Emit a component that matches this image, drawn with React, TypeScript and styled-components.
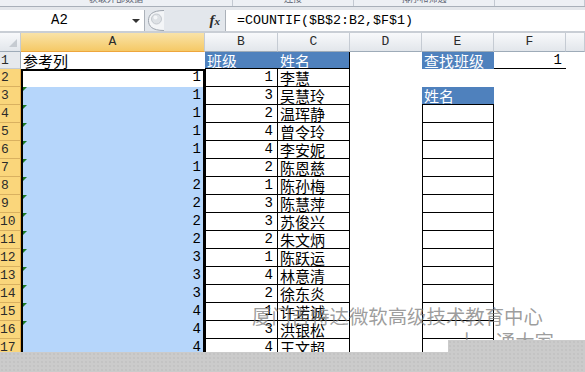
import styled, { createGlobalStyle, css } from 'styled-components';

const GlobalStyle = createGlobalStyle`
  html, body {
    margin: 0;
    padding: 0;
    background: #fff;
  }
  body {
    width: 585px;
    height: 372px;
    overflow: hidden;
    font-family: "Liberation Mono", "Noto Sans CJK SC", monospace;
  }
`;

const Page = styled.div`
  width: 585px;
  height: 372px;
  display: flex;
  flex-direction: column;
  overflow: hidden;
`;

const Ribbon = styled.div`
  height: 6px;
  flex: none;
  display: flex;
  overflow: hidden;
  background: #edf0f4;
  border-bottom: 1px solid #a9b0b9;
`;

const RibbonGroup = styled.div<{ $w?: number }>`
  box-sizing: border-box;
  width: ${p => (p.$w ? `${p.$w}px` : 'auto')};
  flex: ${p => (p.$w ? 'none' : '1')};
  display: flex;
  justify-content: center;
  overflow: hidden;
  border-right: 1px solid #c3c9d1;
`;

const RibbonLabel = styled.span`
  font-family: "Noto Sans CJK SC", sans-serif;
  font-size: 9px;
  line-height: 9px;
  margin-top: -6px;
  color: #5d6573;
  white-space: nowrap;
`;

const TabStrip = styled.div`
  height: 3px;
  flex: none;
  background: #e4e7eb;
`;

const FormulaBar = styled.div`
  height: 21px;
  flex: none;
  display: flex;
  background: #e3e7ec;
  border-bottom: 2px solid #c9ced5;
`;

const NameBox = styled.div`
  box-sizing: border-box;
  width: 145px;
  display: flex;
  align-items: center;
  background: #fff;
  border-right: 1px solid #abb1b9;
`;

const NameText = styled.span`
  width: 119px;
  text-align: center;
  font-size: 14px;
  line-height: 21px;
  color: #000;
`;

const DropArrow = styled.span`
  margin-left: 13px;
  width: 0;
  height: 0;
  border-left: 4px solid transparent;
  border-right: 4px solid transparent;
  border-top: 4px solid #333;
`;

const Splitter = styled.div`
  width: 80px;
  display: flex;
  align-items: center;
  justify-content: space-between;
  padding: 0 5px 0 3px;
  box-sizing: border-box;
`;

const Fx = styled.span`
  font-family: "Liberation Serif", serif;
  font-style: italic;
  font-weight: bold;
  font-size: 15px;
  color: #2a2a2a;

  small {
    font-size: 11px;
  }
`;

const FormulaInput = styled.div`
  flex: 1;
  background: #fff;
  border-left: 1px solid #abb1b9;
  padding-left: 11px;
  font-size: 13.33px;
  line-height: 21px;
  color: #000;
  white-space: nowrap;
`;

const Sheet = styled.div`
  position: relative;
  height: 319px;
  flex: none;
  overflow: hidden;
  display: grid;
  grid-template-columns: 21px 184px 73px 72px 72px 72px 72px 1fr;
  grid-template-rows: 19px 17px repeat(16, 18px);
`;

const ColHead = styled.div<{ $active?: boolean }>`
  box-sizing: border-box;
  position: relative;
  border-right: 1px solid #c5cbd3;
  border-bottom: 1px solid ${p => (p.$active ? '#eea63c' : '#9eabb8')};
  background: ${p =>
    p.$active ? 'linear-gradient(#f9e3a8, #f5c966)' : 'linear-gradient(#f8f9fb, #e2e6eb)'};
  color: #2b2b2b;
  font-size: 13px;
  line-height: 18px;
  text-align: center;
`;

const CornerMark = styled.svg`
  position: absolute;
  right: 3px;
  bottom: 4px;
`;

const RowHead = styled.div<{ $active?: boolean }>`
  box-sizing: border-box;
  border-bottom: 1px solid ${p => (p.$active ? '#d9b160' : '#c5cbd3')};
  border-right: 1px solid ${p => (p.$active ? '#e3a640' : '#9eabb8')};
  background: ${p => (p.$active ? '#fad67b' : '#e6e9ed')};
  color: #2b2b2b;
  font-size: 13px;
  line-height: 18px;
  text-align: center;
  padding-right: 10px;
  white-space: nowrap;
  overflow: hidden;
`;

type Sel = 'top' | 'side';

interface CellProps {
  $align?: 'left' | 'right';
  $bg?: string;
  $color?: string;
  $bl?: boolean;
  $br?: boolean;
  $bb?: boolean;
  $sel?: Sel;
  $flag?: boolean;
}

const line = '1px solid #000';

const Cell = styled.div<CellProps>`
  box-sizing: border-box;
  position: relative;
  padding: 0 4px 0 2px;
  font-size: 14px;
  line-height: 17px;
  white-space: nowrap;
  overflow: hidden;
  text-align: ${p => p.$align ?? 'left'};
  background: ${p => p.$bg ?? '#fff'};
  color: ${p => p.$color ?? '#000'};
  border-left: ${p => (p.$bl ? line : 'none')};
  border-right: ${p => (p.$br ? line : 'none')};
  border-bottom: ${p => (p.$bb ? line : 'none')};
  box-shadow: ${p =>
    p.$sel === 'top'
      ? 'inset 2px 0 0 #000, inset -2px 0 0 #000, inset 0 2px 0 #000'
      : p.$sel === 'side'
      ? 'inset 2px 0 0 #000, inset -2px 0 0 #000'
      : 'none'};

  ${p =>
    p.$flag &&
    css`
      &::before {
        content: '';
        position: absolute;
        left: 2px;
        top: 0;
        border-top: 4px solid #1c7a24;
        border-right: 4px solid transparent;
      }
    `}
`;

const HeadCell = styled(Cell)`
  font-family: "Noto Sans CJK SC", sans-serif;
  font-size: 15px;
`;

const Watermark = styled.div<{ $left: number; $top: number }>`
  position: absolute;
  left: ${p => p.$left}px;
  top: ${p => p.$top}px;
  font-family: "Noto Sans CJK SC", sans-serif;
  font-size: 19.4px;
  line-height: 22px;
  color: rgba(120, 120, 120, 0.72);
  white-space: nowrap;
  pointer-events: none;
`;

const Footer = styled.div`
  position: relative;
  z-index: 2;
  height: 20px;
  flex: none;
  background-color: #cbcbcb;
  background-image: radial-gradient(#c0c0c0 0.6px, transparent 0.9px);
  background-size: 4px 4px;

  &::before {
    content: '';
    position: absolute;
    left: 448px;
    right: 0;
    top: -12px;
    height: 12px;
    background-color: #cbcbcb;
    background-image: radial-gradient(#c0c0c0 0.6px, transparent 0.9px);
    background-size: 4px 4px;
  }
`;

const ref = [1, 1, 1, 1, 1, 1, 2, 2, 2, 2, 3, 3, 3, 4, 4, 4];
const cls = [1, 3, 2, 4, 4, 2, 1, 3, 3, 2, 1, 4, 2, 1, 3, 4];
const names = [
  '李慧', '吴慧玲', '温珲静', '曾令玲', '李安妮', '陈恩慈', '陈孙梅', '陈慧萍',
  '苏俊兴', '朱文炳', '陈跃运', '林意清', '徐东炎', '许诺诚', '洪银松', '王文超',
];

const blue = '#4f81bd';
const selBlue = '#b6d6fb';

export default function App() {
  return (
    <Page>
      <GlobalStyle />
      <Ribbon>
        <RibbonGroup $w={233}>
          <RibbonLabel>获取外部数据</RibbonLabel>
        </RibbonGroup>
        <RibbonGroup $w={121}>
          <RibbonLabel>连接</RibbonLabel>
        </RibbonGroup>
        <RibbonGroup $w={141}>
          <RibbonLabel>排序和筛选</RibbonLabel>
        </RibbonGroup>
        <RibbonGroup />
      </Ribbon>
      <TabStrip />
      <FormulaBar>
        <NameBox>
          <NameText>A2</NameText>
          <DropArrow />
        </NameBox>
        <Splitter>
          <svg width="16" height="21" viewBox="0 0 16 21">
            <path d="M16 0.5 C4 0.5 0.5 5 0.5 10.5 C0.5 16 4 20.5 16 20.5" fill="#f3f5f7" stroke="#9ca3ac" />
            <circle cx="8.5" cy="9" r="5" fill="#dde1e5" stroke="#c4c9cf" />
            <circle cx="7.5" cy="7.5" r="2" fill="#f4f6f8" />
          </svg>
          <Fx>
            f<small>x</small>
          </Fx>
        </Splitter>
        <FormulaInput>=COUNTIF($B$2:B2,$F$1)</FormulaInput>
      </FormulaBar>

      <Sheet>
        <ColHead>
          <CornerMark width="8" height="8" viewBox="0 0 8 8">
            <path d="M8 0 L8 8 L0 8 Z" fill="#c6cbd1" />
          </CornerMark>
        </ColHead>
        <ColHead $active>A</ColHead>
        <ColHead>B</ColHead>
        <ColHead>C</ColHead>
        <ColHead>D</ColHead>
        <ColHead>E</ColHead>
        <ColHead>F</ColHead>
        <ColHead />

        <RowHead>1</RowHead>
        <HeadCell>参考列</HeadCell>
        <HeadCell $bg={blue} $color="#fff" $bb>班级</HeadCell>
        <HeadCell $bg={blue} $color="#fff" $bb $br>姓名</HeadCell>
        <Cell />
        <HeadCell $bg={blue} $color="#fff">查找班级</HeadCell>
        <Cell $align="right" $bb>1</Cell>
        <Cell />

        {ref.map((a, i) => {
          const row = i + 2;
          return [
            <RowHead key={`h${row}`} $active>{row}</RowHead>,
            <Cell
              key={`a${row}`}
              $align="right"
              $bg={row === 2 ? '#fff' : selBlue}
              $sel={row === 2 ? 'top' : 'side'}
              $flag={row > 2 && row < 17}
            >
              {a}
            </Cell>,
            <Cell key={`b${row}`} $align="right" $bl $br $bb>{cls[i]}</Cell>,
            <HeadCell key={`c${row}`} $br $bb>{names[i]}</HeadCell>,
            <Cell key={`d${row}`} />,
            row === 3 ? (
              <HeadCell key={`e${row}`} $bg={blue} $color="#fff" $bb>姓名</HeadCell>
            ) : (
              <Cell key={`e${row}`} $bl={row > 3} $br={row > 3} $bb={row > 3} />
            ),
            <Cell key={`f${row}`} />,
            <Cell key={`g${row}`} />,
          ];
        })}

        <Watermark $left={252} $top={272}>厦门吉特达微软高级技术教育中心</Watermark>
        <Watermark $left={457} $top={297}>十一通大家</Watermark>
      </Sheet>
      <Footer />
    </Page>
  );
}
